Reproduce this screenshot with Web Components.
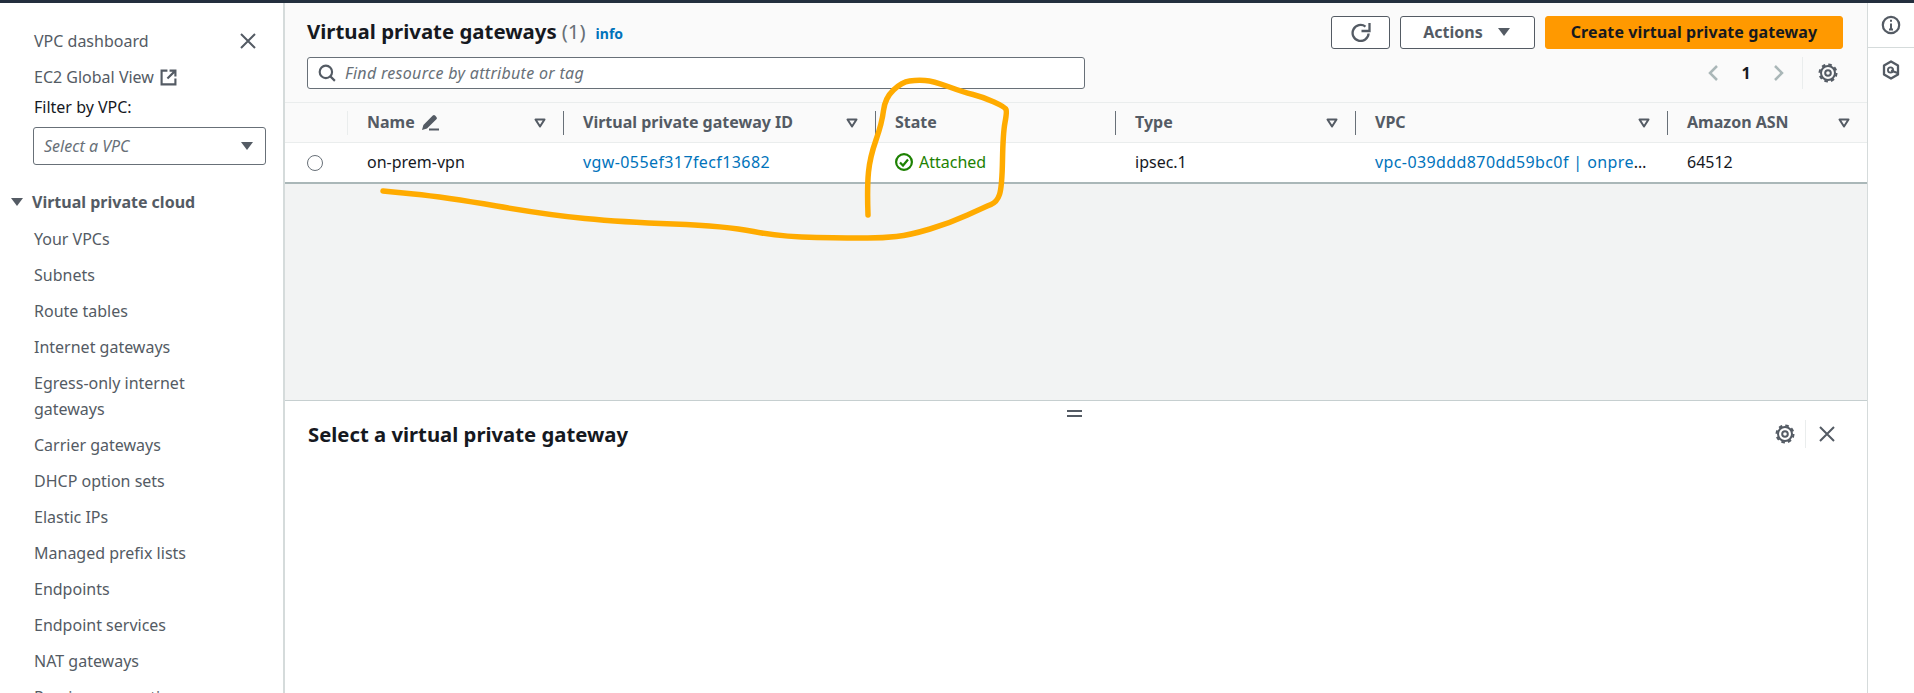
<!DOCTYPE html>
<html lang="en">
<head>
<meta charset="utf-8">
<title>Virtual private gateways</title>
<style>
  html, body { margin: 0; height: 100%; overflow: hidden; background: #fff; }
  body { font-family: "Noto Sans", Roboto, "Liberation Sans", sans-serif; color: #16191f; }
</style>
</head>
<body>
<aws-shell>
  <aws-sidebar slot="side">
    <nav-link>Your VPCs</nav-link>
    <nav-link>Subnets</nav-link>
    <nav-link>Route tables</nav-link>
    <nav-link>Internet gateways</nav-link>
    <nav-link>Egress-only internet gateways</nav-link>
    <nav-link>Carrier gateways</nav-link>
    <nav-link>DHCP option sets</nav-link>
    <nav-link>Elastic IPs</nav-link>
    <nav-link>Managed prefix lists</nav-link>
    <nav-link>Endpoints</nav-link>
    <nav-link>Endpoint services</nav-link>
    <nav-link>NAT gateways</nav-link>
    <nav-link>Peering connections</nav-link>
  </aws-sidebar>
  <vgw-toolbar slot="main"></vgw-toolbar>
  <vgw-table slot="main"></vgw-table>
  <detail-panel slot="main">Select a virtual private gateway</detail-panel>
  <right-rail slot="rail"></right-rail>
  <pen-scribble slot="over"></pen-scribble>
</aws-shell>

<script>
const ICONS = {
    close: `<svg viewBox="0 0 16 16" width="16" height="16" fill="none" stroke="currentColor" stroke-width="2"><path d="M1 1l14 14M15 1L1 15"/></svg>`,
    external: `<svg viewBox="0 0 16 16" width="17" height="17" fill="none" stroke="currentColor" stroke-width="2"><path d="M7 1.5H1.5v13h13V9M9 1.5h5.5V7M14 2L7 9"/></svg>`,
    caret: `<svg viewBox="0 0 16 16" width="16" height="16" fill="currentColor"><path d="M2 4h12L8 12z"/></svg>`,
    sort: `<svg viewBox="0 0 12 10" width="12" height="10" fill="none" stroke="currentColor" stroke-width="2" stroke-linejoin="round"><path d="M1.5 1.5h9L6 8.5z"/></svg>`,
    gear: `<svg viewBox="0 0 20 20" width="20" height="20" fill="none" stroke="currentColor"><circle cx="10" cy="10" r="7" stroke-width="2"/><circle cx="10" cy="10" r="2.8" stroke-width="2"/><circle cx="10" cy="10" r="8.5" stroke-width="2" stroke-dasharray="3.6 3.08"/></svg>`
};

class AwsShell extends HTMLElement {
    connectedCallback() {
        this.attachShadow({ mode: 'open' });
        this.shadowRoot.innerHTML = `
            <style>
                :host { display: block; height: 100vh; position: relative; overflow: hidden; }
                .top { height: 3px; background: #232f3e; }
                .body { display: grid; grid-template-columns: 285px 1fr 47px; height: 690px; }
                .main { display: flex; flex-direction: column; min-width: 0; height: 690px; }
            </style>
            <div class="top"></div>
            <div class="body">
                <slot name="side"></slot>
                <div class="main"><slot name="main"></slot></div>
                <slot name="rail"></slot>
            </div>
            <slot name="over"></slot>
        `;
    }
}

class AwsSidebar extends HTMLElement {
    connectedCallback() {
        this.attachShadow({ mode: 'open' });
        this.shadowRoot.innerHTML = `
            <style>
                :host {
                    display: block;
                    height: 690px;
                    overflow: hidden;
                    box-sizing: border-box;
                    border-right: 2px solid #d5dbdb;
                    padding-top: 25px;
                    color: #545b64;
                    font-size: 16px;
                    line-height: 26px;
                }
                .head { display: flex; justify-content: space-between; align-items: center; padding: 0 27px 0 34px; height: 26px; }
                .head span { display: flex; }
                .ec2 { display: flex; align-items: center; gap: 6px; padding-left: 34px; margin-top: 10px; }
                .filter { padding-left: 34px; margin-top: 4px; color: #16191f; }
                .select {
                    display: flex;
                    justify-content: space-between;
                    align-items: center;
                    box-sizing: border-box;
                    width: 233px;
                    height: 38px;
                    margin: 7px 0 0 33px;
                    padding: 0 10px;
                    border: 1px solid #687078;
                    border-radius: 3px;
                    font-style: italic;
                    color: #687078;
                }
                .select svg { color: #545b64; }
                .group { display: flex; align-items: center; gap: 7px; margin: 24px 0 6px 9px; font-weight: 700; }
            </style>
            <div class="head">VPC dashboard <span>${ICONS.close}</span></div>
            <div class="ec2">EC2 Global View ${ICONS.external}</div>
            <div class="filter">Filter by VPC:</div>
            <div class="select">Select a VPC ${ICONS.caret}</div>
            <div class="group">${ICONS.caret} Virtual private cloud</div>
            <slot></slot>
        `;
    }
}

class NavLink extends HTMLElement {
    connectedCallback() {
        this.attachShadow({ mode: 'open' });
        this.shadowRoot.innerHTML = `
            <style>
                :host { display: block; padding: 5px 0 5px 34px; max-width: 190px; }
            </style>
            <slot></slot>
        `;
    }
}

class VgwToolbar extends HTMLElement {
    connectedCallback() {
        this.attachShadow({ mode: 'open' });
        this.shadowRoot.innerHTML = `
            <style>
                :host {
                    display: grid;
                    grid-template-columns: 1fr auto;
                    row-gap: 8px;
                    align-items: center;
                    box-sizing: border-box;
                    height: 99px;
                    padding: 13px 24px 13px 22px;
                    background: #fafafa;
                    font-size: 16px;
                }
                .title { display: flex; align-items: baseline; gap: 5px; padding-bottom: 3px; font-size: 20.4px; font-weight: 700; }
                .title i { font-style: normal; font-weight: 400; color: #687078; }
                .title a { margin-left: 5px; font-size: 14px; font-weight: 700; color: #0073bb; }
                .actions { display: flex; gap: 10px; }
                button {
                    display: flex;
                    align-items: center;
                    justify-content: center;
                    box-sizing: border-box;
                    height: 33px;
                    padding: 0 0 1px;
                    border: 1px solid #545b64;
                    border-radius: 3px;
                    background: #fff;
                    color: #545b64;
                    font: 700 16px "Noto Sans", Roboto, sans-serif;
                }
                .refresh { width: 59px; }
                .menu { width: 135px; gap: 13px; }
                .primary { width: 298px; border-color: #f90; background: #f90; color: #16191f; letter-spacing: .1px; }
                .search {
                    display: flex;
                    align-items: center;
                    gap: 9px;
                    box-sizing: border-box;
                    width: 778px;
                    height: 32px;
                    padding: 0 10px;
                    border: 1px solid #687078;
                    border-radius: 3px;
                    background: #fff;
                    color: #687078;
                    font-style: italic;
                    letter-spacing: .3px;
                }
                .search svg { color: #545b64; }
                .pager { display: flex; align-items: center; justify-self: end; margin-right: 5px; color: #aab7b8; }
                .pager b { width: 54px; text-align: center; color: #16191f; font-weight: 700; }
                .gear { display: flex; align-items: center; height: 32px; margin-left: 17px; padding-left: 15px; border-left: 1px solid #eaeded; color: #545b64; }
            </style>
            <div class="title">Virtual private gateways <i>(1)</i> <a>info</a></div>
            <div class="actions">
                <button class="refresh" aria-label="Refresh">
                    <svg viewBox="0 0 20 20" width="20" height="20" fill="none" stroke="currentColor" stroke-width="2.3"><path d="M17.6 11.5A8 8 0 1 1 14.5 4.6M18.5 1v8h-8"/></svg>
                </button>
                <button class="menu">Actions ${ICONS.caret}</button>
                <button class="primary">Create virtual private gateway</button>
            </div>
            <div class="search">
                <svg viewBox="0 0 16 16" width="18" height="18" fill="none" stroke="currentColor" stroke-width="1.9"><circle cx="7" cy="7" r="5.5"/><path d="M11 11l4 4"/></svg>
                Find resource by attribute or tag
            </div>
            <div class="pager">
                <svg viewBox="0 0 12 18" width="12" height="18" fill="none" stroke="currentColor" stroke-width="2.5"><path d="M10 2L3 9l7 7"/></svg>
                <b>1</b>
                <svg viewBox="0 0 12 18" width="12" height="18" fill="none" stroke="currentColor" stroke-width="2.5"><path d="M2 2l7 7-7 7"/></svg>
                <span class="gear">${ICONS.gear}</span>
            </div>
        `;
    }
}

class VgwTable extends HTMLElement {
    connectedCallback() {
        const cols = [
            { label: 'Name <svg viewBox="0 0 18 18" width="18" height="18"><path fill="currentColor" d="M1 17l1.4-5L11.8 2.6a1.6 1.6 0 0 1 2.3 0l1.3 1.3a1.6 1.6 0 0 1 0 2.3L6 15.6z"/><path stroke="currentColor" stroke-width="2" d="M8 16.5h10"/></svg>', sort: true },
            { label: 'Virtual private gateway ID', sort: true },
            { label: 'State' },
            { label: 'Type', sort: true },
            { label: 'VPC', sort: true },
            { label: 'Amazon ASN', sort: true }
        ];
        this.attachShadow({ mode: 'open' });
        this.shadowRoot.innerHTML = `
            <style>
                :host { display: flex; flex-direction: column; height: 298px; background: #f2f3f3; font-size: 16px; }
                .row {
                    display: grid;
                    grid-template-columns: 63px 215px 312px 240px 240px 312px 1fr;
                    align-items: center;
                    background: #fff;
                }
                .head { height: 41px; background: #fafafa; border-top: 1px solid #eaeded; border-bottom: 1px solid #eaeded; box-sizing: border-box; font-weight: 700; color: #545b64; }
                .body { height: 41px; box-sizing: border-box; border-bottom: 2px solid #aab7b8; }
                .th {
                    display: flex;
                    align-items: center;
                    justify-content: space-between;
                    box-sizing: border-box;
                    height: 24px;
                    padding: 0 17px 0 19px;
                    border-left: 1px solid #687078;
                }
                .th:first-child { border-left: 0; border-right: 1px solid #eaeded; }
                .th:nth-child(2) { border-left: 0; }
                .th span { display: flex; align-items: center; gap: 6px; padding-bottom: 1px; }
                .td { padding: 0 20px 1px 20px; white-space: nowrap; overflow: hidden; text-overflow: ellipsis; }
                .td:nth-child(2) { padding-left: 19px; }
                .radio { box-sizing: border-box; width: 16px; height: 16px; margin-left: 22px; border: 1px solid #687078; border-radius: 50%; }
                a { color: #0073bb; letter-spacing: .4px; }
                .ok { display: flex; align-items: center; gap: 6px; color: #1d8102; }
            </style>
            <div class="row head">
                <div class="th"></div>
                ${cols.map(c => `<div class="th"><span>${c.label}</span>${c.sort ? ICONS.sort : ''}</div>`).join('')}
            </div>
            <div class="row body">
                <div><div class="radio"></div></div>
                <div class="td">on-prem-vpn</div>
                <div class="td"><a>vgw-055ef317fecf13682</a></div>
                <div class="td ok">
                    <svg viewBox="0 0 18 18" width="18" height="18" fill="none" stroke="currentColor" stroke-width="2.2"><circle cx="9" cy="9" r="7.9"/><path d="M5 9.5l3 3 5-6"/></svg>
                    Attached
                </div>
                <div class="td">ipsec.1</div>
                <div class="td"><a>vpc-039ddd870dd59bc0f | onprem-vpc</a></div>
                <div class="td">64512</div>
            </div>
        `;
    }
}

class DetailPanel extends HTMLElement {
    connectedCallback() {
        this.attachShadow({ mode: 'open' });
        this.shadowRoot.innerHTML = `
            <style>
                :host { display: block; flex: 1; background: #fff; border-top: 1px solid #c6cfd0; }
                .grip { width: 15px; height: 7px; margin: 9px 0 0 782px; border-top: 2px solid #545b64; border-bottom: 2px solid #545b64; box-sizing: border-box; }
                .bar { display: flex; align-items: center; justify-content: space-between; padding: 3px 32px 0 23px; }
                h2 { margin: 0; font-size: 20.3px; font-weight: 700; }
                .tools { display: flex; align-items: center; color: #545b64; }
                .tools span { display: flex; align-items: center; height: 28px; }
                .tools .x { margin-left: 10px; padding-left: 13px; border-left: 1px solid #eaeded; }
            </style>
            <div class="grip"></div>
            <div class="bar">
                <h2><slot></slot></h2>
                <div class="tools"><span>${ICONS.gear}</span><span class="x">${ICONS.close}</span></div>
            </div>
        `;
    }
}

class RightRail extends HTMLElement {
    connectedCallback() {
        this.attachShadow({ mode: 'open' });
        this.shadowRoot.innerHTML = `
            <style>
                :host { display: block; height: 690px; box-sizing: border-box; border-left: 1px solid #d5dbdb; color: #545b64; }
                div { display: flex; align-items: center; justify-content: center; }
                .info { height: 44px; border-bottom: 1px solid #d5dbdb; }
                .hex { height: 44px; }
            </style>
            <div class="info">
                <svg viewBox="0 0 20 20" width="20" height="20" fill="none" stroke="currentColor" stroke-width="2.2"><circle cx="10" cy="10" r="8.2"/><path d="M10 8.5v6M8 14.5h4M10 4.8v2" stroke-width="2"/></svg>
            </div>
            <div class="hex">
                <svg viewBox="0 0 18 20" width="18" height="20" fill="none" stroke="currentColor" stroke-width="2.3" stroke-linejoin="round"><path d="M9 1.5l7 4v9l-7 4-7-4v-9z"/><circle cx="8.5" cy="10" r="2.6" stroke-width="1.8"/><path d="M9 10.5l6.5 2.5" stroke-width="2.2"/></svg>
            </div>
        `;
    }
}

class PenScribble extends HTMLElement {
    connectedCallback() {
        const pts = [[868,215],[867,187],[870,157],[882,123],[885,98],[902,82],[917,80],[933,81],[963,92],[983,97],[1005,107],[1007,112],[1003,133],[1002,187],[997,202],[985,207],[950,223],[910,235],[883,238],[852,238],[781,237],[726,226],[621,222],[549,215],[444,197],[383,191]];
        let d = `M${pts[0]}`;
        for (let i = 1; i < pts.length - 1; i++) {
            const mx = (pts[i][0] + pts[i + 1][0]) / 2;
            const my = (pts[i][1] + pts[i + 1][1]) / 2;
            d += ` Q${pts[i]} ${mx},${my}`;
        }
        d += ` L${pts[pts.length - 1]}`;
        this.attachShadow({ mode: 'open' });
        this.shadowRoot.innerHTML = `
            <style>
                :host { position: absolute; inset: 0; pointer-events: none; }
                svg { display: block; }
            </style>
            <svg width="1914" height="693" fill="none" stroke="#ffab00" stroke-width="5.5" stroke-linecap="round" stroke-linejoin="round"><path d="${d}"/></svg>
        `;
    }
}

customElements.define('aws-shell', AwsShell);
customElements.define('aws-sidebar', AwsSidebar);
customElements.define('nav-link', NavLink);
customElements.define('vgw-toolbar', VgwToolbar);
customElements.define('vgw-table', VgwTable);
customElements.define('detail-panel', DetailPanel);
customElements.define('right-rail', RightRail);
customElements.define('pen-scribble', PenScribble);
</script>
</body>
</html>
